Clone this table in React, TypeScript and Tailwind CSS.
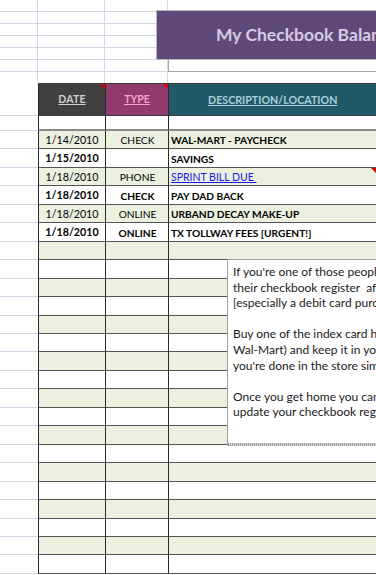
import React from "react";

type Row = { date: string; type: string; desc: string; bold: boolean; link?: boolean; flag?: boolean };

const data: Row[] = [
  { date: "1/14/2010", type: "CHECK", desc: "WAL-MART - PAYCHECK", bold: false },
  { date: "1/15/2010", type: "", desc: "SAVINGS", bold: true },
  { date: "1/18/2010", type: "PHONE", desc: "SPRINT BILL DUE ", bold: false, link: true, flag: true },
  { date: "1/18/2010", type: "CHECK", desc: "PAY DAD BACK", bold: true },
  { date: "1/18/2010", type: "ONLINE", desc: "URBAND DECAY MAKE-UP", bold: false },
  { date: "1/18/2010", type: "ONLINE", desc: "TX TOLLWAY FEES [URGENT!]", bold: true },
];

const rows: (Row | null)[] = [...data, ...Array.from({ length: 18 }, () => null)];

const font = { fontFamily: "Lato, 'Open Sans', sans-serif" };

function RedTri() {
  return (
    <span className="absolute right-0 top-0 w-0 h-0 border-t-[5px] border-t-[#e00000] border-l-[5px] border-l-transparent" />
  );
}

export default function App() {
  return (
    <div className="relative w-[376px] h-[575px] overflow-hidden bg-white" style={font}>
      {/* top grid */}
      <div className="flex flex-col">
        {[0, 1, 2, 3, 4, 5].map((i) => (
          <div key={i} className="flex h-[12px] border-b border-[#d0d7e5]">
            <div className="w-[38px] border-r border-[#d0d7e5]" />
            <div className="w-[67px] border-r border-[#d0d7e5]" />
            <div className="w-[63px] border-r border-[#d0d7e5]" />
            <div className="flex-1" />
          </div>
        ))}
        <div className="flex h-[11px]">
          <div className="w-[38px] border-r border-[#d0d7e5]" />
          <div className="w-[67px] border-r border-[#d0d7e5]" />
          <div className="w-[63px] border-r border-[#d0d7e5]" />
          <div className="flex-1" />
        </div>
      </div>

      {/* header */}
      <div className="flex h-[33px]">
        <div className="w-[38px] border-b border-[#d0d7e5]" />
        <div className="flex flex-1 border-t border-b border-[#3a3a3a]">
          <div className="relative w-[67px] border-l border-[#2a2a2a] bg-[#404040] flex items-center justify-center pt-[1px]">
            <span className="text-[10.5px] font-bold underline text-[#d0d0d0] tracking-[0.2px]">DATE</span>
            <RedTri />
          </div>
          <div className="relative w-[63px] border-l border-[#2a2a2a] bg-[#923a6b] flex items-center justify-center pt-[1px]">
            <span className="text-[10.5px] font-bold underline text-[#f7a3c6]">TYPE</span>
            <RedTri />
          </div>
          <div className="flex-1 border-l border-[#2a2a2a] bg-[#215968] flex items-center pl-[39px] pt-[1px]">
            <span className="text-[10.7px] font-bold underline text-[#a9cfdc] whitespace-nowrap">DESCRIPTION/LOCATION</span>
          </div>
        </div>
      </div>

      {/* empty white row */}
      <div className="flex h-[15px]">
        <div className="w-[38px] border-b border-[#d0d7e5]" />
        <div className="w-[67px] border-l border-[#2a2a2a] border-b-2 border-b-[#8a8a8a]" />
        <div className="w-[63px] border-l border-[#2a2a2a] border-b-2 border-b-[#8a8a8a]" />
        <div className="flex-1 border-l border-[#2a2a2a] border-b-2 border-b-[#8a8a8a]" />
      </div>

      {/* data rows */}
      <div className="flex flex-col h-[443px]">
        {rows.map((r, i) => {
          const bg = i % 2 === 0 ? "bg-[#ebf1de]" : "bg-white";
          return (
            <div key={i} className="flex flex-1 min-h-0">
              <div className="w-[38px] border-b border-[#d0d7e5]" />
              <div className={`w-[67px] border-l border-[#2a2a2a] border-b border-b-[#555] ${bg} flex items-end justify-center pb-[3px]`}>
                {r && (
                  <span className={`text-[10.7px] leading-none text-black ${r.bold ? "font-bold" : "font-normal"}`}>{r.date}</span>
                )}
              </div>
              <div className={`w-[63px] border-l border-[#2a2a2a] border-b border-b-[#555] ${bg} flex items-end justify-center pb-[3px] pl-[1px]`}>
                {r && (
                  <span className={`text-[10.2px] leading-none text-black ${r.bold ? "font-bold" : "font-normal"}`}>{r.type}</span>
                )}
              </div>
              <div className={`relative flex-1 border-l border-[#2a2a2a] border-b border-b-[#555] ${bg} flex items-end pl-[2px] pb-[3px]`}>
                {r &&
                  (r.link ? (
                    <span className="text-[10.5px] leading-none text-[#1a1aee] underline whitespace-pre">{r.desc}</span>
                  ) : (
                    <span className="text-[10.2px] leading-none text-black font-bold whitespace-nowrap">{r.desc}</span>
                  ))}
                {r?.flag && <RedTri />}
              </div>
            </div>
          );
        })}
      </div>

      {/* title shape */}
      <div className="absolute left-[156px] top-[10px] w-[300px] h-[50px] bg-[#5f497a] border border-[#b8b8c0] flex items-center pl-[59px]">
        <span className="text-[17.5px] font-bold text-[#d6cbe4] whitespace-nowrap">My Checkbook Balancer</span>
      </div>
      <div className="absolute left-[168px] top-[60px] w-[240px] h-[12px] border-l border-b border-[#a8a8a8] bg-white" />

      {/* note box */}
      <div className="absolute left-[227px] top-[259px] w-[220px] h-[187px] bg-white border-l border-t border-[#a0a0a0] flex flex-col">
        <div className="flex-1 pl-[5px] pt-[4px] text-[12px] leading-[15.6px] text-[#1a1a1a] whitespace-pre">
          <div>If you're one of those people who forget to</div>
          <div>their checkbook register  after making a purchase</div>
          <div>[especially a debit card purchase]</div>
          <div>&nbsp;</div>
          <div>Buy one of the index card holders (sold at</div>
          <div>Wal-Mart) and keep it in your purse. When</div>
          <div>you're done in the store simply write it down.</div>
          <div>&nbsp;</div>
          <div>Once you get home you can</div>
          <div>update your checkbook register.</div>
        </div>
        <div className="h-[3px] bg-[repeating-linear-gradient(90deg,#9a9a9a_0_1px,#d8d8d8_1px_2px)]" />
      </div>
    </div>
  );
}
